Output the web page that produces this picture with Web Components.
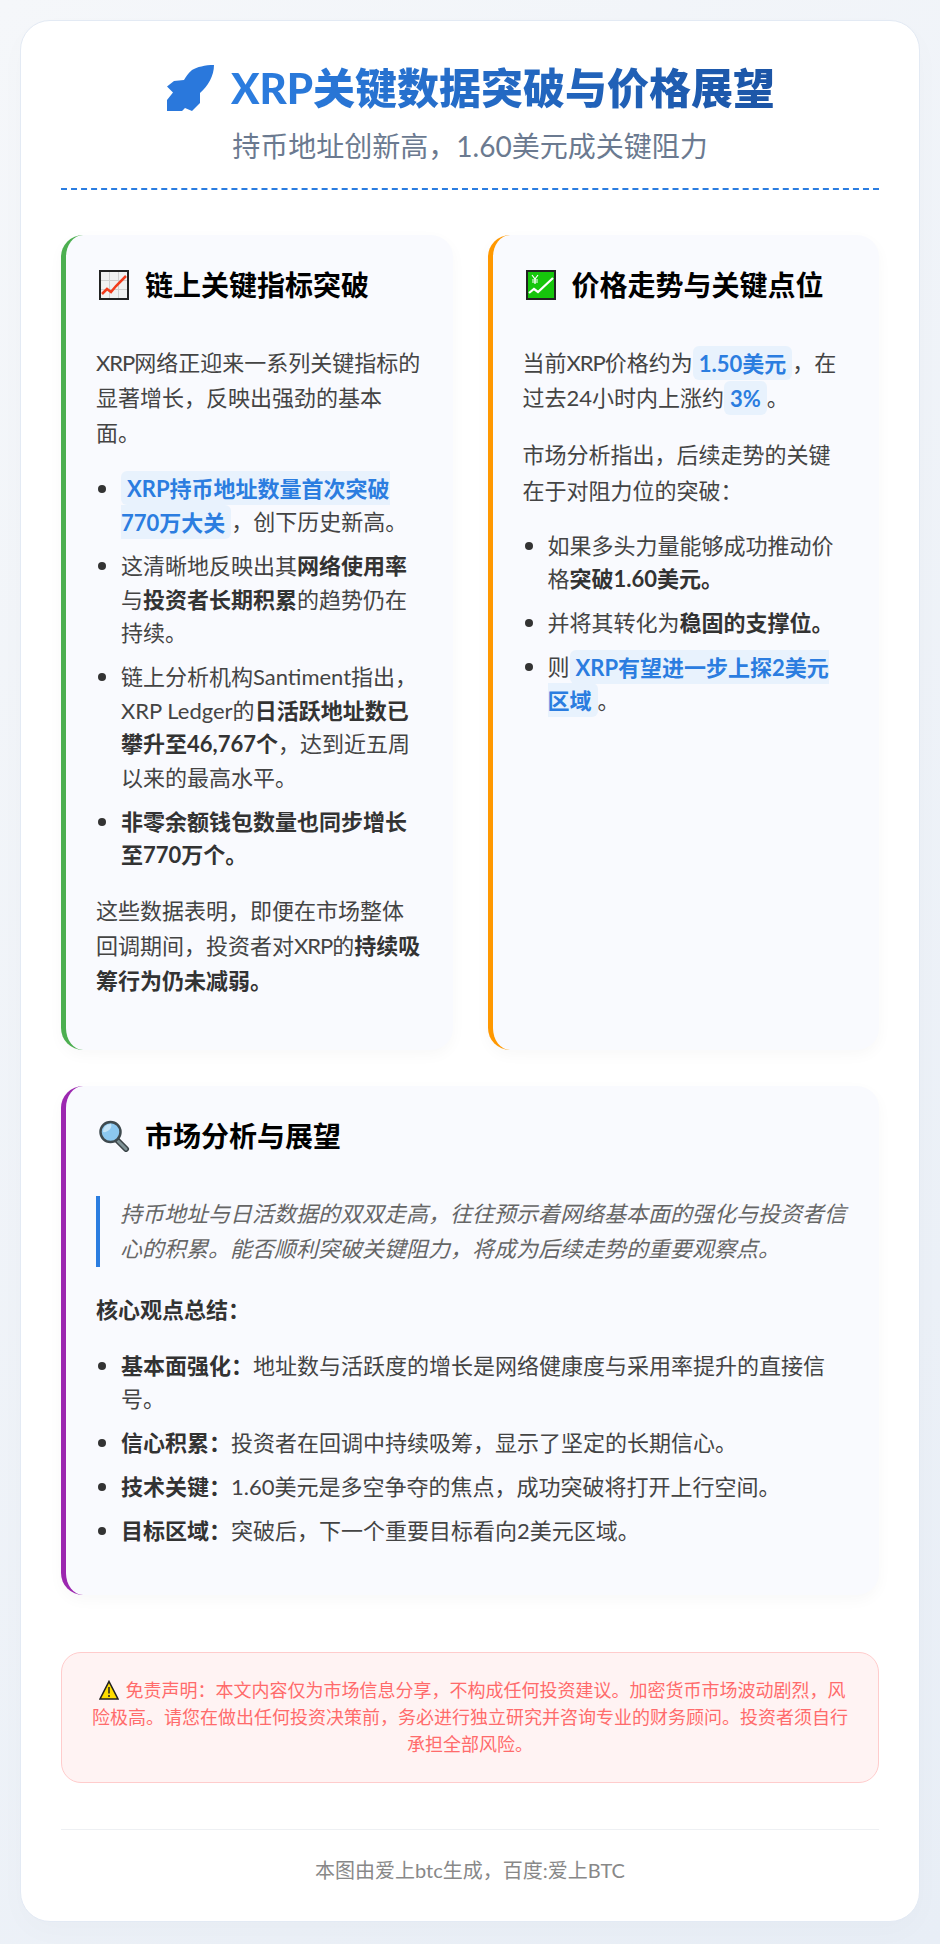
<!DOCTYPE html>
<html lang="zh-CN">
<head>
<meta charset="utf-8">
<title>XRP关键数据突破与价格展望</title>
<style>
html,body{margin:0;padding:0}
body{box-sizing:border-box;height:1944px;padding-top:20px;overflow:hidden;background:linear-gradient(135deg,#f5f7fa 0%,#e8eef6 100%);font-family:"Lato","Noto Sans CJK SC",sans-serif;color:#444}
</style>
</head>
<body>
<report-page>
  <report-header>
    <span slot="title">XRP关键数据突破与价格展望</span>
    <span slot="sub">持币地址创新高，1.60美元成关键阻力</span>
  </report-header>
  <two-col>
    <info-card accent="#4caf50" icon="chart">
      <span slot="title">链上关键指标突破</span>
      <card-para><tight-latin>XRP</tight-latin>网络正迎来一系列关键指标的显著增长，反映出强劲的基本面。</card-para>
      <bullet-list tight>
        <bullet-item><hl-mark>XRP持币地址数量首次突破770万大关</hl-mark>，创下历史新高。</bullet-item>
        <bullet-item>这清晰地反映出其<key-term>网络使用率</key-term>与<key-term>投资者长期积累</key-term>的趋势仍在持续。</bullet-item>
        <bullet-item>链上分析机构Santiment指出，XRP Ledger的<key-term>日活跃地址数已攀升至46,767个</key-term>，达到近五周以来的最高水平。</bullet-item>
        <bullet-item><key-term>非零余额钱包数量也同步增长至770万个。</key-term></bullet-item>
      </bullet-list>
      <card-para>这些数据表明，即便在市场整体回调期间，投资者对<tight-latin>XRP</tight-latin>的<key-term>持续吸筹行为仍未减弱。</key-term></card-para>
    </info-card>
    <info-card accent="#ff9800" icon="yen">
      <span slot="title">价格走势与关键点位</span>
      <card-para>当前<tight-latin>XRP</tight-latin>价格约为<hl-mark>1.50美元</hl-mark>，在过去24小时内上涨约<hl-mark>3%</hl-mark>。</card-para>
      <card-para>市场分析指出，后续走势的关键在于对阻力位的突破：</card-para>
      <bullet-list tight>
        <bullet-item>如果多头力量能够成功推动价格<key-term>突破1.60美元。</key-term></bullet-item>
        <bullet-item>并将其转化为<key-term>稳固的支撑位。</key-term></bullet-item>
        <bullet-item>则<hl-mark>XRP有望进一步上探2美元区域</hl-mark>。</bullet-item>
      </bullet-list>
    </info-card>
  </two-col>
  <info-card accent="#9c27b0" icon="search">
    <span slot="title">市场分析与展望</span>
    <quote-note>持币地址与日活数据的双双走高，往往预示着网络基本面的强化与投资者信心的积累。能否顺利突破关键阻力，将成为后续走势的重要观察点。</quote-note>
    <card-para><key-term>核心观点总结：</key-term></card-para>
    <bullet-list>
      <bullet-item><key-term>基本面强化：</key-term>地址数与活跃度的增长是网络健康度与采用率提升的直接信号。</bullet-item>
      <bullet-item><key-term>信心积累：</key-term>投资者在回调中持续吸筹，显示了坚定的长期信心。</bullet-item>
      <bullet-item><key-term>技术关键：</key-term>1.60美元是多空争夺的焦点，成功突破将打开上行空间。</bullet-item>
      <bullet-item><key-term>目标区域：</key-term>突破后，下一个重要目标看向2美元区域。</bullet-item>
    </bullet-list>
  </info-card>
  <risk-note>免责声明：本文内容仅为市场信息分享，不构成任何投资建议。加密货币市场波动剧烈，风险极高。请您在做出任何投资决策前，务必进行独立研究并咨询专业的财务顾问。投资者须自行承担全部风险。</risk-note>
  <page-footer>本图由爱上btc生成，百度:爱上BTC</page-footer>
</report-page>
<script>
const def = (name, html, extra) => {
  customElements.define(name, class extends HTMLElement {
    constructor(){ super(); this.attachShadow({mode:'open'}).innerHTML = html; }
    connectedCallback(){ if(extra) extra(this); }
  });
};
def('report-page', `<style>:host{display:block;box-sizing:border-box;width:900px;margin:0 auto;background:#fff;border:1px solid #e3eaf4;border-radius:30px;padding:40px 40px 35px;box-shadow:0 10px 30px rgba(0,0,0,.02)}</style><slot></slot>`);
def('report-header', `<style>
:host{display:block;text-align:center;border-bottom:2px dashed #2b7de0;padding-bottom:20px;margin-bottom:45px}
h1{margin:0 0 9px;font-size:42px;line-height:54px;font-weight:900;display:flex;justify-content:center;align-items:center}
.t{background:linear-gradient(90deg,#2b7de0,#1c55a6);-webkit-background-clip:text;background-clip:text;color:transparent}
svg{display:block;width:47px;height:46px;margin:0 17px 0 2px;flex:none}
p{margin:0;font-size:28px;line-height:44px;color:#6b7a90}
</style>
<h1><svg viewBox="0 0 47 46" aria-hidden="true"><path fill="#2a78dc" d="M47 0C38 0 30 2 25 5C21 8 19 12 17 15L7 16L0 21.500L6 27.500L0 35V46H15L18 43L25 46L33 38V28C41 21 47 11 47 0Z"/></svg><span class="t"><slot name="title"></slot></span></h1>
<p><slot name="sub"></slot></p>`);
def('two-col', `<style>:host{display:grid;grid-template-columns:1fr 1fr;gap:35px;margin-bottom:36px}</style><slot></slot>`);
const icons = {
 chart:`<svg viewBox="0 0 30 30"><rect x="1" y="1" width="28" height="28" fill="#f1f1f1" stroke="#222" stroke-width="2"/><path d="M10.500 2v26M19.500 2v26M2 10.500h26M2 19.500h26" stroke="#d0d0d0" fill="none"/><path d="M3 24l5-5 4 3 5-6 10-10" stroke="#f23c1c" stroke-width="2.500" fill="none"/></svg>`,
 yen:`<svg viewBox="0 0 30 30"><rect x="1" y="1" width="28" height="28" fill="#16c60c" stroke="#222" stroke-width="2"/><path d="M3 23l5-4 4 3 15-14" stroke="#fff" stroke-width="2.200" fill="none"/><path d="M6 5l3 4 3-4M9 9v5M6 10h6M6 12h6" stroke="#fff" stroke-width="1.200" fill="none"/></svg>`,
 search:`<svg viewBox="0 0 32 32"><path d="M19 20l9 9" stroke="#3a4347" stroke-width="6" stroke-linecap="round"/><path d="M20 21l8 8" stroke="#7f9296" stroke-width="3" stroke-linecap="round"/><circle cx="12.500" cy="12" r="10" fill="#8cc8f0" stroke="#3f4a4f" stroke-width="2.500"/><path d="M5 12a7.500 7.500 0 0 1 8-8c2 4-4 9-8 8z" fill="#c4e4f8"/></svg>`
};
def('info-card', `<style>
:host{display:block;box-sizing:border-box;background:#f9fafe;border-left:5px solid var(--accent);border-radius:22px;padding:30px;box-shadow:0 5px 15px rgba(0,0,0,.03);min-width:0}
h2{margin:0 0 40px;font-size:28px;line-height:40px;font-weight:700;color:#000;display:flex;align-items:center}
.i{flex:none;width:49px;display:flex}
svg{display:block;width:30px;height:30px;margin-left:3px}
.i.search svg{width:32px;height:32px;margin-left:2px}
</style><h2><span class="i"></span><slot name="title"></slot></h2><slot></slot>`, el => {
  el.style.setProperty('--accent', el.getAttribute('accent'));
  const k = el.getAttribute('icon'), s = el.shadowRoot.querySelector('.i');
  s.classList.add(k); s.innerHTML = icons[k];
});
def('card-para', `<style>:host{display:block;font-size:22px;line-height:35.200px;margin:0 0 22px;color:#444}</style><slot></slot>`);
def('tight-latin', `<style>:host{display:inline;letter-spacing:-1px}</style><slot></slot>`);
def('bullet-list', `<style>:host{display:block;margin:0 0 20px;padding-left:25px}:host(:last-child){margin-bottom:17px}:host([tight]){margin-top:-1px;margin-bottom:21px}</style><slot></slot>`);
def('bullet-item', `<style>:host{display:list-item;list-style:disc outside;font-size:22px;line-height:33.500px;margin-bottom:10.500px;color:#444}:host::marker{font-family:"Noto Sans",sans-serif;color:#333}</style><slot></slot>`);
def('key-term', `<style>:host{display:inline;font-weight:700;color:#333}</style><slot></slot>`);
def('hl-mark', `<style>:host{display:inline;font-weight:700;color:#2b7de0;background:#e8f2fd;padding:3.500px 6px;border-radius:6px}</style><slot></slot>`);
def('quote-note', `<style>:host{display:block;border-left:4px solid #2b7de0;padding-left:20px;margin:3px 0 25px;font-size:22px;line-height:35.200px;font-style:italic;color:#666}</style><slot></slot>`);
def('risk-note', `<style>
:host{display:block;box-sizing:border-box;margin-top:57px;background:#fff3f3;border:1px solid #ffcccc;border-radius:20px;padding:24px 30px;font-size:18px;line-height:27px;color:#ff6b6b;text-align:center}
svg{width:20px;height:20px;vertical-align:-3px;margin:0 7px 0 4px}
</style><svg viewBox="0 0 20 20"><path d="M10 1.500L19 19H1z" fill="#ffde00" stroke="#222" stroke-width="1.600" stroke-linejoin="miter"/><path d="M10 7v6.500M10 15v2" stroke="#222" stroke-width="1.500"/></svg><slot></slot>`);
def('page-footer', `<style>:host{display:block;margin-top:46px;border-top:1px solid #eef0f3;padding-top:24px;text-align:center;font-size:20px;line-height:32px;color:#888}</style><slot></slot>`);
</script>
</body>
</html>
